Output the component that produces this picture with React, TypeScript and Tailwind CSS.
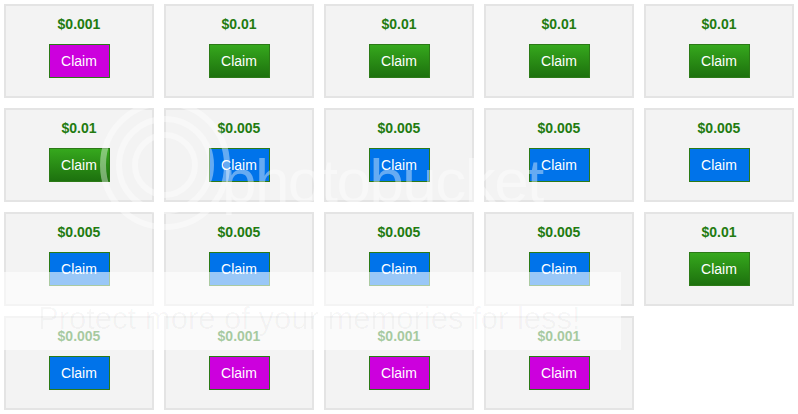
import React from 'react'

type Kind = 'green' | 'blue' | 'magenta'

const rewards: { amount: string; kind: Kind }[] = [
  { amount: '$0.001', kind: 'magenta' },
  { amount: '$0.01', kind: 'green' },
  { amount: '$0.01', kind: 'green' },
  { amount: '$0.01', kind: 'green' },
  { amount: '$0.01', kind: 'green' },
  { amount: '$0.01', kind: 'green' },
  { amount: '$0.005', kind: 'blue' },
  { amount: '$0.005', kind: 'blue' },
  { amount: '$0.005', kind: 'blue' },
  { amount: '$0.005', kind: 'blue' },
  { amount: '$0.005', kind: 'blue' },
  { amount: '$0.005', kind: 'blue' },
  { amount: '$0.005', kind: 'blue' },
  { amount: '$0.005', kind: 'blue' },
  { amount: '$0.01', kind: 'green' },
  { amount: '$0.005', kind: 'blue' },
  { amount: '$0.001', kind: 'magenta' },
  { amount: '$0.001', kind: 'magenta' },
  { amount: '$0.001', kind: 'magenta' },
]

const buttonStyles: Record<Kind, string> = {
  green: 'bg-gradient-to-b from-[#36a81d] to-[#1d710e]',
  blue: 'bg-[#0073ea]',
  magenta: 'bg-[#cc00dd]',
}

function RewardCard({ amount, kind }: { amount: string; kind: Kind }) {
  return (
    <div className="flex h-[94px] w-[150px] flex-col items-center border-2 border-[#e4e4e4] bg-[#f3f3f3] pt-[10px]">
      <div className="text-[14px] leading-[16px] font-bold text-[#227b10]">{amount}</div>
      <button
        className={`mt-[12px] h-[34px] w-[61px] border border-[#2b7a16] text-[14px] leading-none text-white ${buttonStyles[kind]}`}
      >
        Claim
      </button>
    </div>
  )
}

export default function App() {
  return (
    <div className="relative h-[414px] w-[798px] overflow-hidden bg-white font-['Liberation_Sans',Arial,sans-serif]">
      <div className="grid grid-cols-[repeat(5,150px)] gap-[10px] p-[4px]">
        {rewards.map((r, i) => (
          <RewardCard key={i} amount={r.amount} kind={r.kind} />
        ))}
      </div>

      {/* watermark overlay */}
      <svg className="pointer-events-none absolute left-[95px] top-[95px]" width="140" height="140" viewBox="0 0 140 140">
        <g fill="none" stroke="#ffffff" strokeOpacity="0.4" strokeWidth="6">
          <circle cx="70" cy="70" r="62" />
          <circle cx="70" cy="70" r="46" />
          <circle cx="70" cy="70" r="30" />
        </g>
      </svg>
      <div className="pointer-events-none absolute left-[222px] top-[150px] whitespace-nowrap text-[62px] leading-none tracking-tight text-white/40">
        photobucket
      </div>
      <div className="pointer-events-none absolute left-[4px] top-[272px] flex h-[78px] w-[617px] items-center overflow-hidden bg-white/60 pl-[34px] pt-[14px]">
        <span className="whitespace-nowrap text-[31px] leading-none text-black/[0.035]">
          Protect more of your memories for less!
        </span>
      </div>
    </div>
  )
}
